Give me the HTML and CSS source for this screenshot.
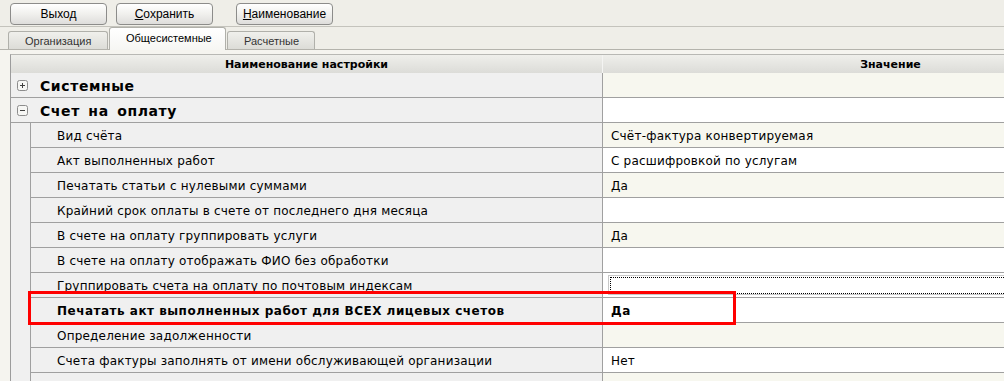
FILE: index.html
```html
<!DOCTYPE html>
<html>
    <head>
        <title>Настройки</title>
        <link rel="stylesheet" href="styles.css">
    </head>
    <body>
        <div class='toolbar'>
            <button class='btn'>Выход</button>
            <button class='btn'><u>С</u>охранить</button>
            <button class='btn far'><u>Н</u>аименование</button>
        </div>
        <div class='tabs'>
            <div class='tab'>Организация</div>
            <div class='tab active'>Общесистемные</div>
            <div class='tab'>Расчетные</div>
        </div>
        <div class='panel'>
            <div class='grid'>
                <div class='head'>
                    <div class='hname'>Наименование настройки</div>
                    <div class='hval'>Значение</div>
                </div>

                <div class='row group'>
                    <div class='name'>
                        <svg class='toggle' width='11' height='11' viewBox='0 0 11 11'><rect x='0.5' y='0.5' width='10' height='10' rx='2' fill='#f6f6f4' stroke='#8c8c8c'/><path d='M3 5.5h5M5.5 3v5' stroke='#404040'/></svg>
                        Системные
                    </div>
                    <div class='val alt'></div>
                </div>
                <div class='row group'>
                    <div class='name'>
                        <svg class='toggle' width='11' height='11' viewBox='0 0 11 11'><rect x='0.5' y='0.5' width='10' height='10' rx='2' fill='#f6f6f4' stroke='#8c8c8c'/><path d='M3 5.5h5' stroke='#404040'/></svg>
                        Счет на оплату
                    </div>
                    <div class='val'></div>
                </div>

                <div class='row'>
                    <div class='indent'></div>
                    <div class='name'>Вид счёта</div>
                    <div class='val alt'>Счёт-фактура конвертируемая</div>
                </div>
                <div class='row'>
                    <div class='indent'></div>
                    <div class='name'>Акт выполненных работ</div>
                    <div class='val'>С расшифровкой по услугам</div>
                </div>
                <div class='row'>
                    <div class='indent'></div>
                    <div class='name'>Печатать статьи с нулевыми суммами</div>
                    <div class='val alt'>Да</div>
                </div>
                <div class='row'>
                    <div class='indent'></div>
                    <div class='name'>Крайний срок оплаты в счете от последнего дня месяца</div>
                    <div class='val'></div>
                </div>
                <div class='row'>
                    <div class='indent'></div>
                    <div class='name'>В счете на оплату группировать услуги</div>
                    <div class='val alt'>Да</div>
                </div>
                <div class='row'>
                    <div class='indent'></div>
                    <div class='name'>В счете на оплату отображать ФИО без обработки</div>
                    <div class='val'></div>
                </div>
                <div class='row current'>
                    <div class='indent'></div>
                    <div class='name'>Группировать счета на оплату по почтовым индексам</div>
                    <div class='val'><div class='edit'><div class='focus'></div></div></div>
                </div>
                <div class='row strong'>
                    <div class='indent'></div>
                    <div class='name'>Печатать акт выполненных работ для ВСЕХ лицевых счетов</div>
                    <div class='val'>Да</div>
                </div>
                <div class='row'>
                    <div class='indent'></div>
                    <div class='name'>Определение задолженности</div>
                    <div class='val alt'></div>
                </div>
                <div class='row'>
                    <div class='indent'></div>
                    <div class='name'>Счета фактуры заполнять от имени обслуживающей организации</div>
                    <div class='val'>Нет</div>
                </div>
                <div class='row'>
                    <div class='indent'></div>
                    <div class='name'></div>
                    <div class='val alt'></div>
                </div>
            </div>
            <div class='mark'></div>
        </div>
    </body>
</html>
```

FILE: styles.css
```css
body{
    margin: 0;
    background-color: #efeee8;
    font-family: "Liberation Sans", Arial, sans-serif;
    width: 1004px;
    height: 381px;
    overflow: hidden;
}
.toolbar{
    display: flex;
    align-items: flex-start;
    height: 27px;
    padding: 3px 0 0 10px;
    box-sizing: border-box;
    border-bottom: 1px solid #c4c3bc;
}
.btn{
    width: 97px;
    height: 22px;
    margin-right: 9px;
    padding: 0;
    border: 1px solid #8c8c8a;
    border-radius: 4px;
    background: linear-gradient(#ffffff, #f2f2ef 45%, #dedddb);
    font-family: "Liberation Sans", Arial, sans-serif;
    font-size: 12px;
    color: #000;
}
.btn.far{
    margin-left: 14px;
}
.tabs{
    display: flex;
    align-items: flex-end;
    height: 22px;
    padding-left: 8px;
    border-bottom: 1px solid #b4b3ac;
}
.tab{
    height: 18px;
    line-height: 18px;
    padding: 0 16px;
    margin-right: 1px;
    border: 1px solid #b0b0aa;
    border-bottom: none;
    border-radius: 3px 3px 0 0;
    background: linear-gradient(#f0f0ec, #dcdcd7);
    font-size: 11px;
    color: #333;
    box-sizing: border-box;
    text-align: center;
}
.tab:first-child{
    width: 100px;
}
.tab:last-child{
    width: 88px;
}
.tab.active{
    width: 117px;
    height: 23px;
    line-height: 20px;
    margin-bottom: -1px;
    background: linear-gradient(#ffffff, #f6f6f3);
    color: #000;
}
.panel{
    position: relative;
    background-color: #f5f4ef;
    padding-top: 4px;
}
.grid{
    margin-left: 10px;
    border-left: 1px solid #9c9c9c;
    border-top: 1px solid #b8b8b4;
    font-family: "DejaVu Sans", sans-serif;
    font-size: 12px;
    letter-spacing: 0.2px;
    color: #000;
}
.head{
    display: flex;
    height: 18px;
    background: linear-gradient(#efefeb, #dcdcd8);
    font-size: 11px;
    font-weight: bold;
    letter-spacing: 0;
    line-height: 19px;
}
.hname{
    width: 591px;
    text-align: center;
}
.hval{
    flex: 1;
    padding-left: 174px;
    border-left: 1px solid #f4f4f2;
    text-align: center;
}
.row{
    display: flex;
    height: 25px;
}
.indent{
    width: 19px;
    background-color: #f0f0f0;
    border-right: 1px solid #a0a0a0;
}
.name{
    width: 571px;
    padding: 1px 0 0 26px;
    box-sizing: border-box;
    background-color: #f0f0f0;
    border-bottom: 1px solid #a0a0a0;
    line-height: 24px;
    white-space: nowrap;
    overflow: hidden;
}
.group .name{
    width: 591px;
    padding-left: 6px;
    display: flex;
    align-items: center;
    font-size: 14px;
    font-weight: bold;
    letter-spacing: 0.6px;
    word-spacing: 3px;
}
.toggle{
    margin-right: 12px;
}
.val{
    flex: 1;
    padding: 1px 0 0 8px;
    box-sizing: border-box;
    background-color: #ffffff;
    border-left: 1px solid #a0a0a0;
    border-bottom: 1px solid #a0a0a0;
    line-height: 24px;
    white-space: nowrap;
}
.val.alt{
    background-color: #f7f7ef;
}
.strong .name,
.strong .val{
    font-weight: bold;
    letter-spacing: 0.5px;
}
.current .val{
    padding: 2px 0 0 5px;
}
.edit{
    height: 20px;
    border: 1px solid #c8c8c8;
    border-right: none;
    box-sizing: border-box;
    padding: 1px 0 0 1px;
}
.focus{
    height: 17px;
    border: 1px dotted #000;
    border-right: none;
    box-sizing: border-box;
}
.mark{
    position: absolute;
    left: 28px;
    top: 241px;
    width: 708px;
    height: 34px;
    border: 3px solid #ff0000;
    box-sizing: border-box;
}
```
